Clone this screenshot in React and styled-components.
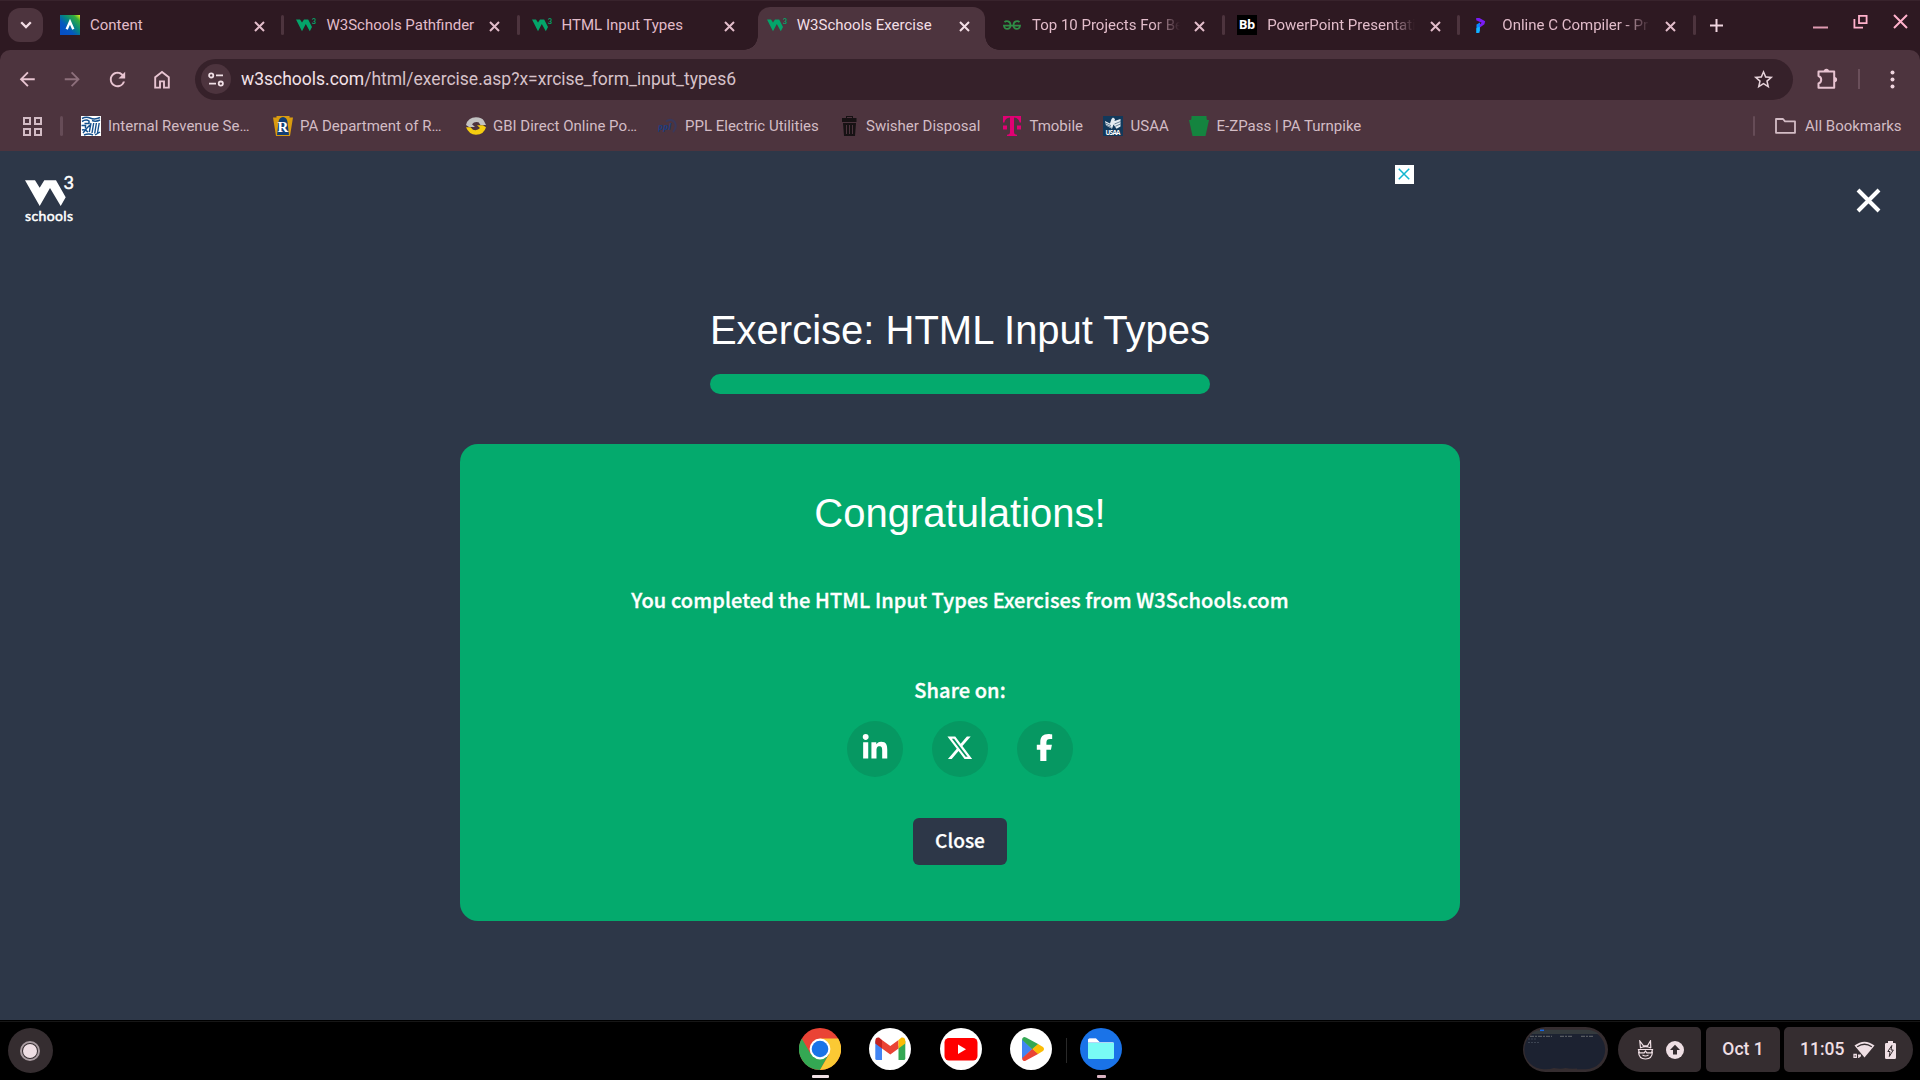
import React from "react";
import styled, { createGlobalStyle } from "styled-components";
import { FaLinkedinIn, FaFacebookF, FaXTwitter } from "react-icons/fa6";
import { MdArrowBack, MdArrowForward, MdRefresh, MdStarBorder } from "react-icons/md";

const Global = createGlobalStyle`
  *, *::before, *::after { box-sizing: border-box; }
  html, body { margin: 0; padding: 0; background: #000; overflow: hidden; }
  svg { display: block; flex: none; }
  button { border: 0; padding: 0; margin: 0; background: none; color: inherit; font: inherit; }
`;

const Screen = styled.div`
  width: 1920px;
  height: 1080px;
  display: flex;
  flex-direction: column;
  overflow: hidden;
  font-family: Roboto, "Noto Sans", sans-serif;
  background: #2d3748;
`;

/* Tab strip */
const TabStrip = styled.div`
  height: 50px;
  flex: none;
  display: flex;
  background: #2e1922;
  border-top: 1px solid #38232c;
  padding-left: 8px;
`;
const TabSearch = styled.button`
  width: 35px;
  height: 34px;
  margin: 7px 5px 0 0;
  border-radius: 12px;
  background: #4d343e;
  color: #f3dde5;
  display: grid;
  place-items: center;
`;
const Tab = styled.div`
  position: relative;
  width: ${(p) => (p.$first ? 236.4 : 235.2)}px;
  height: 48px;
  flex: none;
  display: flex;
  align-items: center;
  padding-left: 12px;
  color: ${(p) => (p.$active ? "#f3dfe6" : "#e2bcca")};
`;
const TabShape = styled.div`
  position: absolute;
  left: 3px;
  right: 5px;
  top: 6px;
  bottom: -1px;
  border-radius: 12px 12px 0 0;
  background: #4d343e;
  &::before, &::after {
    content: "";
    position: absolute;
    bottom: 0;
    width: 14px;
    height: 14px;
  }
  &::before { left: -14px; background: radial-gradient(circle at 0 0, transparent 13.5px, #4d343e 14px); }
  &::after { right: -14px; background: radial-gradient(circle at 100% 0, transparent 13.5px, #4d343e 14px); }
`;
const TabIcon = styled.span`
  position: relative;
  width: 20px;
  height: 20px;
  flex: none;
`;
const TabTitle = styled.span`
  position: relative;
  width: 148px;
  margin-left: 10px;
  font-size: 15px;
  line-height: 20px;
  white-space: nowrap;
  ${(p) => p.$fade && "-webkit-mask-image: linear-gradient(90deg, #000 122px, transparent 148px); mask-image: linear-gradient(90deg, #000 122px, transparent 148px);"}
`;
const TabClose = styled.button`
  position: relative;
  width: 20px;
  height: 20px;
  margin: 2px 0 0 ${(p) => (p.$first ? 11 : 10)}px;
  display: grid;
  place-items: center;
`;
const TabDivider = styled.span`
  width: 3px;
  height: 20px;
  margin-left: auto;
  border-radius: 1.5px;
  background: ${(p) => (p.$hidden ? "transparent" : "#4d343e")};
`;
const NewTab = styled.button`
  width: 41px;
  height: 48px;
  color: #f0d5df;
  display: grid;
  place-items: center;
`;
const WindowControls = styled.div`
  margin-left: auto;
  padding: 13px 12px 0 0;
  display: flex;
  gap: 25px;
  color: #ffb1cb;
`;

/* Toolbar */
const ToolbarBack = styled.div`
  flex: none;
  background: #2e1922;
`;
const Toolbar = styled.div`
  height: 101px;
  background: #4d343e;
  border-radius: 10px 10px 0 0;
`;
const NavRow = styled.div`
  height: 58px;
  display: flex;
  align-items: center;
  padding-left: 5px;
`;
const NavButton = styled.button`
  width: 45px;
  height: 41px;
  display: grid;
  place-items: center;
  color: ${(p) => (p.$off ? "#8d6f7b" : "#e8c4d1")};
`;
const AddressBar = styled.div`
  width: 1598px;
  height: 41px;
  margin-left: 10px;
  padding: 0 18px 0 6px;
  border-radius: 21px;
  background: #36212a;
  display: flex;
  align-items: center;
`;
const SiteInfo = styled.span`
  width: 30px;
  height: 30px;
  border-radius: 50%;
  background: #4d343e;
  display: grid;
  place-items: center;
  color: #f0dfe5;
`;
const Url = styled.span`
  margin-left: 10px;
  flex: 1;
  font-size: 17.5px;
  line-height: 24px;
  color: #d6c1c9;
  b { font-weight: 400; color: #f3e2e8; }
`;
const Extensions = styled.button`
  margin-left: 22.5px;
  color: #e8c4d1;
`;
const ThinLine = styled.span`
  width: 2px;
  height: 20px;
  margin: 0 0 0 20.5px;
  background: #6a4f5a;
`;
const Menu = styled.button`
  margin-left: 30px;
  color: #f0d5df;
`;

const BookmarkRow = styled.div`
  height: 36px;
  display: flex;
  align-items: center;
  color: #d3bcc5;
  font-size: 15px;
  padding: 0 18px 0 23px;
`;
const BarLine = styled.span`
  width: 3px;
  height: 20px;
  border-radius: 1.5px;
  background: #664c57;
  margin-left: ${(p) => p.$left}px;
  margin-right: ${(p) => p.$right}px;
`;
const Bookmark = styled.a`
  width: ${(p) => p.$w}px;
  flex: none;
  display: flex;
  align-items: center;
  gap: ${(p) => p.$gap || 7.5}px;
  white-space: nowrap;
  line-height: 20px;
`;

/* Exercise page */
const Page = styled.main`
  flex: 1;
  min-height: 0;
  background: #2d3748;
  color: #fff;
  display: flex;
  flex-direction: column;
  align-items: center;
`;
const PageHeader = styled.header`
  width: 100%;
  height: 149px;
  display: flex;
  align-items: flex-start;
  padding: 14px 39px 0 24px;
`;
const Logo = styled.a`
  margin-top: 7px;
`;
const AdClose = styled.button`
  width: 19px;
  height: 19px;
  margin-left: 1321px;
  padding: 0 1px 1px 0;
  background: #fff;
  display: grid;
  place-items: center;
`;
const ExitButton = styled.button`
  margin: 23px 0 0 auto;
`;
const Heading = styled.h1`
  margin: 0;
  font: 400 40px/60px "Liberation Sans", Arial, sans-serif;
  white-space: nowrap;
`;
const Progress = styled.div`
  width: 500px;
  height: 20px;
  margin-top: 14px;
  border-radius: 10px;
  background: #04aa6d;
`;
const Panel = styled.section`
  width: 1000px;
  height: 477px;
  margin-top: 50px;
  padding-top: 39px;
  border-radius: 18px;
  background: #04aa6d;
  display: flex;
  flex-direction: column;
  align-items: center;
`;
const Message = styled.p`
  margin: ${(p) => p.$top}px 0 0;
  font: 500 20px/30px "Noto Sans CJK JP", "Noto Sans CJK SC", sans-serif;
  letter-spacing: 0.1px;
  -webkit-text-stroke: 0.35px #fff;
  white-space: nowrap;
`;
const ShareRow = styled.div`
  margin-top: 16px;
  display: flex;
  gap: 29px;
`;
const ShareButton = styled.button`
  width: 56px;
  height: 56px;
  border-radius: 50%;
  background: #069862;
  padding: 0 1px 3px 0;
  display: grid;
  place-items: center;
`;
const CloseButton = styled.button`
  width: 94px;
  height: 47px;
  margin-top: 41px;
  padding-bottom: 2px;
  border-radius: 6px;
  background: #2d3748;
  font: 500 19.2px/45px "Noto Sans CJK JP", "Noto Sans CJK SC", sans-serif;
  -webkit-text-stroke: 0.25px #fff;
`;

/* Shelf */
const Shelf = styled.footer`
  height: 60px;
  flex: none;
  background: #000;
  border-top: 1px solid #000;
  box-shadow: inset 0 1px 0 #161616;
  display: flex;
  align-items: flex-start;
  padding: 6px 7px 0 8px;
`;
const Launcher = styled.button`
  width: 45px;
  height: 45px;
  margin-top: 1px;
  padding-right: 1px;
  border-radius: 50%;
  background: #352d30;
  display: grid;
  place-items: center;
`;
const LauncherRing = styled.span`
  width: 20px;
  height: 20px;
  border-radius: 50%;
  border: 2px solid #a99ca1;
  display: grid;
  place-items: center;
  &::after { content: ""; width: 14px; height: 14px; border-radius: 50%; background: #efdfe4; }
`;
const Apps = styled.div`
  margin: 1px 0 0 746.3px;
  display: flex;
  gap: 28.2px;
`;
const AppSlot = styled.div`
  width: 42px;
  display: flex;
  flex-direction: column;
  align-items: center;
  gap: 5px;
`;
const Running = styled.span`
  width: ${(p) => p.$w}px;
  height: 3px;
  margin-left: 1px;
  border-radius: 1px;
  background: ${(p) => p.$c};
`;
const ShelfLine = styled.span`
  width: 1px;
  height: 25px;
  margin: 10px -15.5px 0 -14px;
  background: #292929;
`;
const Tray = styled.div`
  margin-left: auto;
  display: flex;
  color: #efdfe4;
  font: 500 17.5px/45px Roboto, sans-serif;
`;
const Thumbs = styled.div`
  margin-right: 10px;
`;
const TrayPill = styled.div`
  width: ${(p) => p.$w}px;
  height: 45px;
  margin-right: ${(p) => p.$gap || 0}px;
  border-radius: ${(p) => p.$r};
  background: #352d30;
  display: flex;
  align-items: center;
  justify-content: ${(p) => (p.$center ? "center" : "flex-start")};
  padding-left: ${(p) => p.$pl || 0}px;
  gap: ${(p) => p.$inner || 0}px;
`;

const Cross = ({ size, stroke, cap = "butt", color = "currentColor" }) => (
  <svg width={size} height={size} viewBox={`0 0 ${size} ${size}`} stroke={color} strokeWidth={stroke} strokeLinecap={cap}>
    <path d={`M${stroke / 2} ${stroke / 2}L${size - stroke / 2} ${size - stroke / 2}M${size - stroke / 2} ${stroke / 2}L${stroke / 2} ${size - stroke / 2}`} />
  </svg>
);

const W3Icon = () => (
  <svg width="20" height="20" viewBox="0 0 20 20">
    <path d="M0 4.5H4L6 7.5L8 4.5H12.2L16 12L13.8 16.3L9.8 9L6 16.3Z" fill="#04a46a" />
    <text x="15.8" y="8.6" fontFamily="Lato, sans-serif" fontSize="7.5" fontWeight="700" fill="#04a46a">3</text>
  </svg>
);
const ContentIcon = () => (
  <svg width="20" height="20" viewBox="0 0 20 20">
    <defs>
      <linearGradient id="cg" x1="1" y1="0" x2="0.15" y2="0.85">
        <stop offset="0" stopColor="#f2ee1a" /><stop offset=".2" stopColor="#35ad3c" />
        <stop offset=".5" stopColor="#058681" /><stop offset=".75" stopColor="#0557c0" /><stop offset="1" stopColor="#0550c4" />
      </linearGradient>
    </defs>
    <rect width="20" height="20" fill="url(#cg)" />
    <path d="M6.7 14.2L10 6.8L13.3 14.2" fill="none" stroke="#fff" strokeWidth="2.4" />
  </svg>
);
const GeeksIcon = () => (
  <svg width="20" height="20" viewBox="0 0 20 20" fill="none" stroke="#2f8d46" strokeWidth="1.7">
    <path d="M2.5 7.2C4 5.6 8.5 5.6 8.5 10.2C8.5 15 2 15 1.9 10.6H18.1C18 15 11.5 15 11.5 10.2C11.5 5.6 16 5.6 17.5 7.2" />
  </svg>
);
const BbIcon = () => (
  <svg width="20" height="20" viewBox="0 0 20 20">
    <rect width="20" height="20" fill="#000" />
    <text x="10" y="14.3" textAnchor="middle" fontFamily="Open Sans, sans-serif" fontSize="13" fontWeight="700" fill="#fff" textLength="16.5">Bb</text>
  </svg>
);
const ProgramizIcon = () => (
  <svg width="20" height="20" viewBox="0 0 20 20">
    <path d="M4.5 9.5L8 7.5V11L7.4 18H4.5Z" fill="#0a8dff" />
    <path d="M4.2 3L7.4 3L13.2 6.2L12.4 9.3L7.6 12.8V9.8L9.7 7.8L4.2 5.2Z" fill="#7a1cf5" />
    <path d="M4.4 13.2L7.8 11.6V16L6 18H4.4Z" fill="#12b4ff" />
  </svg>
);

const tabs = [
  { title: "Content", icon: <ContentIcon />, first: true },
  { title: "W3Schools Pathfinder", icon: <W3Icon /> },
  { title: "HTML Input Types", icon: <W3Icon />, noLine: true },
  { title: "W3Schools Exercise", icon: <W3Icon />, active: true, noLine: true },
  { title: "Top 10 Projects For Be", icon: <GeeksIcon />, fade: true },
  { title: "PowerPoint Presentati", icon: <BbIcon />, fade: true },
  { title: "Online C Compiler - Pr", icon: <ProgramizIcon />, fade: true },
];

const IrsIcon = () => (
  <svg width="20" height="20" viewBox="0 0 20 20" fill="none" stroke="#14508c" strokeWidth="1.5">
    <rect width="20" height="20" fill="#fff" stroke="none" />
    <path d="M1 2.5Q5 .5 9 2Q14 4 19 1.5M1 5.5Q5 3 8 5V7.5H3.5M.5 9.5H4.5V12.5M1 14Q4 13 7 16M3 19Q8 17 12 19M11 4.5Q15 6 19 4" />
    <path d="M10 7L8.3 16M12.7 7L11 17M15.4 7L13.7 17.5M18.2 7L16.5 17M2 17L6 12L9 9M14 19L19 16" strokeWidth="1.4" />
  </svg>
);
const PaIcon = () => (
  <svg width="20" height="20" viewBox="0 0 20 20">
    <path d="M3.5 0H16.5V1.5H20L17 20H3L0 1.5H3.5Z" fill="#d99b10" />
    <path d="M5.5 6Q6 1.5 10 1Q14 1.5 14.5 6L16 19H4Z" fill="#123e74" />
    <text x="10" y="15.5" textAnchor="middle" fontFamily="Liberation Serif, serif" fontSize="15" fontWeight="700" fill="#fff">R</text>
  </svg>
);
const GbiIcon = () => (
  <svg width="20" height="20" viewBox="0 0 20 20">
    <path d="M0 9Q2 1.3 10 1.3Q16 1.3 18 5L20 9H14.5L12.5 6.3Q8.5 5 6 8.2L9 11H3Z" fill="#c2c2c2" />
    <path d="M0 11.3H4.5L7 13.8Q11.5 15 14 12L11 9.2H17L20 11.3Q18 18.7 10 18.7Q3 18.7 0 11.3Z" fill="#f5cd10" />
  </svg>
);
const PplIcon = () => (
  <svg width="20" height="20" viewBox="0 0 20 20">
    <path d="M8 5.5Q13 2 16.5 6Q19.5 11 15 16" fill="none" stroke="#343a63" strokeWidth="2" opacity=".8" />
    <text x="0" y="14" fontFamily="Open Sans, sans-serif" fontSize="8.5" fontWeight="700" fontStyle="italic" fill="#1b3c80" textLength="13">ppl</text>
  </svg>
);
const TrashIcon = () => (
  <svg width="20" height="20" viewBox="0 0 20 20">
    <path d="M7 0H14V2H17.5V6H3V2H7Z" fill="#171214" />
    <path d="M4 7H17L16 20H5Z" fill="#171214" />
    <path d="M7.5 9V18M10.5 9V18M13.5 9V18" stroke="#4d343e" strokeWidth="1" />
    <path d="M8 1.5H13" stroke="#4d343e" strokeWidth="1" />
  </svg>
);
const TmobileIcon = () => (
  <svg width="20" height="20" viewBox="0 0 20 20" fill="#e20074">
    <path d="M1 0H19V6.5H17.6Q17 2 12 1.6V16Q12 18.6 15 18.8V20H5V18.8Q8 18.6 8 16V1.6Q3 2 2.4 6.5H1Z" />
    <path d="M1 9.5H5V13.5H1ZM15 9.5H19V13.5H15Z" />
  </svg>
);
const UsaaIcon = () => (
  <svg width="20" height="20" viewBox="0 0 20 20">
    <rect width="20" height="20" fill="#12395b" />
    <path d="M2 5L7 7.5L8.5 3L10 1.5L12 3L11.5 5L17.5 3V10.5L13.5 12.8L10.5 8.5L9 12.8L3 9.5Z" fill="#e7edf2" />
    <path d="M2.5 7L8 9.6M3 9L8.4 11.5M17.5 5.5L11.5 8M17.5 8L12.3 10.3" stroke="#12395b" strokeWidth=".6" />
    <text x="10" y="18.7" textAnchor="middle" fontFamily="Open Sans, sans-serif" fontSize="6.4" fontWeight="700" fill="#fff" textLength="15">USAA</text>
  </svg>
);
const KeystoneIcon = () => (
  <svg width="20" height="20" viewBox="0 0 20 20">
    <path d="M2.5 0H17.5V2L18 4H20L16.5 20H3.5L0 4H2L2.5 2Z" fill="#14843f" />
  </svg>
);

const bookmarks = [
  [192, "Internal Revenue Se…", <IrsIcon />],
  [193, "PA Department of R…", <PaIcon />],
  [192, "GBI Direct Online Po…", <GbiIcon />],
  [181, "PPL Electric Utilities", <PplIcon />],
  [163.5, "Swisher Disposal", <TrashIcon />],
  [101, "Tmobile", <TmobileIcon />],
  [86, "USAA", <UsaaIcon />],
  [180, "E-ZPass | PA Turnpike", <KeystoneIcon />],
];

const AppIcon = ({ children, bg = "#fff" }) => (
  <svg width="42" height="42" viewBox="0 0 42 42">
    <circle cx="21" cy="21" r="21" fill={bg} />
    {children}
  </svg>
);

export default function App() {
  return (
    <Screen>
      <Global />
      <TabStrip>
        <TabSearch>
          <svg width="12" height="8" viewBox="0 0 12 8" fill="none" stroke="currentColor" strokeWidth="2.3"><path d="M1.2 1.2L6 6L10.8 1.2" /></svg>
        </TabSearch>
        {tabs.map((t) => (
          <Tab key={t.title} $active={t.active} $first={t.first}>
            {t.active && <TabShape />}
            <TabIcon>{t.icon}</TabIcon>
            <TabTitle $fade={t.fade}>{t.title}</TabTitle>
            <TabClose $first={t.first}><Cross size={11} stroke={2} /></TabClose>
            <TabDivider $hidden={t.noLine} />
          </Tab>
        ))}
        <NewTab>
          <svg width="13" height="13" viewBox="0 0 13 13" stroke="currentColor" strokeWidth="2"><path d="M6.5 0V13M0 6.5H13" /></svg>
        </NewTab>
        <WindowControls>
          <svg width="15" height="15" viewBox="0 0 15 15" stroke="currentColor" strokeWidth="2" opacity=".85"><path d="M0 13.5H15" /></svg>
          <svg width="15" height="15" viewBox="0 0 15 15" fill="none" stroke="currentColor" strokeWidth="1.8"><path d="M6 1.9H13.6V9.2H6ZM1.4 5V13.7H10" /></svg>
          <Cross size={15} stroke={2} />
        </WindowControls>
      </TabStrip>

      <ToolbarBack>
        <Toolbar>
          <NavRow>
            <NavButton><MdArrowBack size={22.5} /></NavButton>
            <NavButton $off><MdArrowForward size={22.5} /></NavButton>
            <NavButton><MdRefresh size={23} /></NavButton>
            <NavButton>
              <svg width="17" height="19" viewBox="0 0 17 19" fill="none" stroke="currentColor" strokeWidth="1.9"><path d="M1.2 17.6V7.2L8 2L14.8 7.2V17.6H10V11.4H6V17.6Z" /></svg>
            </NavButton>
            <AddressBar>
              <SiteInfo>
                <svg width="16" height="15" viewBox="0 0 16 15" fill="none" stroke="currentColor" strokeWidth="1.8"><circle cx="3.2" cy="3.4" r="2.1" /><path d="M8 3.4H15M1 11.6H8" /><circle cx="12.8" cy="11.6" r="2.1" /></svg>
              </SiteInfo>
              <Url><b>w3schools.com</b>/html/exercise.asp?x=xrcise_form_input_types6</Url>
              <MdStarBorder size={23} color="#e6d2d9" />
            </AddressBar>
            <Extensions>
              <svg width="22" height="22" viewBox="0 0 22 22" fill="none" stroke="currentColor" strokeWidth="2" strokeLinejoin="round">
                <path d="M2.5 3.6H18.2V19.8H2.5V15.4Q5.2 14.5 5.2 11.7Q5.2 9 2.5 8Z" />
                <path d="M7.8 3.3a2.6 2.6 0 0 1 5.2 0ZM18.5 9a2.6 2.6 0 0 1 0 5.2Z" fill="currentColor" stroke="none" />
              </svg>
            </Extensions>
            <ThinLine />
            <Menu>
              <svg width="5" height="19" viewBox="0 0 5 19" fill="currentColor"><circle cx="2.5" cy="2.5" r="2" /><circle cx="2.5" cy="9.5" r="2" /><circle cx="2.5" cy="16.5" r="2" /></svg>
            </Menu>
          </NavRow>
          <BookmarkRow>
            <svg width="19" height="19" viewBox="0 0 19 19" fill="none" stroke="currentColor" strokeWidth="2"><path d="M1 1H7V7H1ZM12 1H18V7H12ZM1 12H7V18H1ZM12 12H18V18H12Z" /></svg>
            <BarLine $left={18} $right={18} />
            {bookmarks.map(([w, name, icon]) => (
              <Bookmark key={name} $w={w}>{icon}<span>{name}</span></Bookmark>
            ))}
            <BarLine $left={383.5} $right={20} />
            <Bookmark $w={127} $gap={9}>
              <svg width="21" height="16" viewBox="0 0 21 16" fill="none" stroke="currentColor" strokeWidth="1.8"><path d="M1 14.8V1H8L10 3.4H20V14.8Z" strokeLinejoin="round" /></svg>
              <span>All Bookmarks</span>
            </Bookmark>
          </BookmarkRow>
        </Toolbar>
      </ToolbarBack>

      <Page>
        <PageHeader>
          <Logo>
            <svg width="50" height="52" viewBox="0 0 50 52" fill="#fff">
              <path d="M1 8.2H11L15.7 15.8L20.3 8.2H32L41.7 25.3L36.7 34L26 16L15.7 34Z" />
              <text x="39.4" y="16.8" fontFamily="Lato, sans-serif" fontSize="18" fontWeight="400" stroke="#fff" strokeWidth=".5">3</text>
              <text x="1" y="48.8" fontFamily="Lato, sans-serif" fontSize="14" fontWeight="400" stroke="#fff" strokeWidth=".5" textLength="48">schools</text>
            </svg>
          </Logo>
          <AdClose><Cross size={12} stroke={1.5} color="#12b5cf" /></AdClose>
          <ExitButton><Cross size={25} stroke={4} /></ExitButton>
        </PageHeader>
        <Heading>Exercise: HTML Input Types</Heading>
        <Progress />
        <Panel>
          <Heading>Congratulations!</Heading>
          <Message $top={42}>You completed the HTML Input Types Exercises from W3Schools.com</Message>
          <Message $top={60}>Share on:</Message>
          <ShareRow>
            <ShareButton><FaLinkedinIn size={28} /></ShareButton>
            <ShareButton><FaXTwitter size={27.5} /></ShareButton>
            <ShareButton><FaFacebookF size={27} /></ShareButton>
          </ShareRow>
          <CloseButton>Close</CloseButton>
        </Panel>
      </Page>

      <Shelf>
        <Launcher><LauncherRing /></Launcher>
        <Apps>
          <AppSlot>
            <AppIcon bg="#ea4335">
              <path d="M2.8 10.5A21 21 0 0 0 21 42L30 26L21 21L11.9 26.2Z" fill="#34a853" />
              <path d="M21 42A21 21 0 0 0 39.2 10.5H21L30.1 26.2Z" fill="#fbc934" />
              <circle cx="21" cy="21" r="10.4" fill="#fff" />
              <circle cx="21" cy="21" r="8.3" fill="#1a73e8" />
            </AppIcon>
            <Running $w={17} $c="#efdfe4" />
          </AppSlot>
          <AppSlot>
            <AppIcon>
              <path d="M6.3 13V30.5Q6.3 32 7.8 32H13V18Z" fill="#4285f4" />
              <path d="M29.5 18V32H34.7Q36.3 32 36.3 30.5V13Z" fill="#34a853" />
              <path d="M13 12V20.5L21.3 26.5L29.5 20.5V12L21.3 18Z" fill="#ea4335" />
              <path d="M6.3 15.5V12.8Q6.5 9 10 9.6L13 12V20.5Z" fill="#c5221f" />
              <path d="M36.3 15.5V12.8Q36 9 32.5 9.6L29.5 12V20.5Z" fill="#fbbc04" />
            </AppIcon>
          </AppSlot>
          <AppSlot>
            <AppIcon>
              <rect x="4.5" y="10" width="33" height="22.5" rx="4.5" fill="#f00" />
              <path d="M18 16.5V26L26 21.2Z" fill="#fff" />
            </AppIcon>
          </AppSlot>
          <AppSlot>
            <AppIcon>
              <path d="M12 11V31L22.5 21Z" fill="#4285f4" />
              <path d="M12.3 10.5Q13.5 8 16 9.5L28.5 16.3L22.5 21.5L12.3 12Z" fill="#34a853" />
              <path d="M12.3 31.5Q13.5 34 16 32.5L28.5 25.7L22.5 20.7L12.3 30Z" fill="#ea4335" />
              <path d="M28 16L33 19Q35 21 33 23L28 26L22.3 21Z" fill="#fbbc04" />
            </AppIcon>
          </AppSlot>
          <ShelfLine />
          <AppSlot>
            <AppIcon bg="#1a73e8">
              <path d="M8 13V12Q8 10.5 9.5 10.5H16L19.5 14H32.5Q34 14 34 15.5V17H8Z" fill="#c5c9f4" />
              <path d="M8 12Q8 10.5 9.5 10.5H16L19.5 14H8Z" fill="#fff" />
              <path d="M8 14.8H34V29.5Q34 31 32.5 31H9.5Q8 31 8 29.5Z" fill="#78fbf5" />
            </AppIcon>
            <Running $w={9} $c="#d9b3c2" />
          </AppSlot>
        </Apps>
        <Tray>
          <Thumbs>
            <svg width="85" height="45" viewBox="0 0 85 45">
              <rect width="85" height="45" rx="22.5" fill="#352d30" />
              <path d="M21 3H63.5A19.5 19.5 0 0 1 54 41.5Q46 42 42.5 41Q38 42.5 31 41Q27 42.5 21 42.3A19.5 19.5 0 0 1 21 3Z" fill="#1c2231" />
              <path d="M62 3A19.5 19.5 0 0 1 63 42.3H54V3Z" fill="#1c2231" />
              <path d="M9 6Q14 2.8 21 2.8H63Q71 3 76 7H9Z" fill="#343a3d" />
              <path d="M17 3.3H21" stroke="#1766df" strokeWidth="1.5" />
              <path d="M7 9.3H29M37 9.3H50M58 9.3H70" stroke="#66696d" strokeWidth="1" strokeDasharray="4 1 2 1" />
              <path d="M5 12H13M5 15.5H16" stroke="#454d5b" strokeWidth=".8" strokeDasharray="2 1" />
            </svg>
          </Thumbs>
          <TrayPill $w={82.5} $r="23px 5px 5px 23px" $gap={5.5} $pl={18.5} $inner={12}>
            <svg width="17" height="20" viewBox="0 0 17 20" fill="none" stroke="currentColor" strokeWidth="1.2">
              <path d="M3.5 8L2.8 1L6.5 5.8H10.5L13.5 .8L13.8 8M3 8Q8.5 5.5 14 8M1.5 11.5Q1.8 19 8.5 19Q15.2 19 15.5 11.5M5.5 15Q8.5 17 11.5 15" />
              <path d="M1.5 9.5H15.5L14.5 12.8H9.8L8.5 11L7.2 12.8H2.5Z" />
            </svg>
            <svg width="18" height="18" viewBox="0 0 18 18"><circle cx="9" cy="9" r="9" fill="currentColor" /><path d="M9 3.8L14 9H11V13.6H7V9H4Z" fill="#352d30" /></svg>
          </TrayPill>
          <TrayPill $w={74} $r="5px" $gap={4} $center>Oct 1</TrayPill>
          <TrayPill $w={129} $r="5px 23px 23px 5px" $pl={16} $inner={9}>
            <span>11:05</span>
            <svg width="22" height="18" viewBox="0 0 22 18">
              <path d="M1.5 4.5Q11.5-3.2 21.5 4.5L11.5 16.5Z" fill="currentColor" />
              <path d="M4.2 5.8Q11.5 .7 18.8 5.8" fill="none" stroke="#352d30" strokeWidth="1.3" />
              <path d="M0 12.3H6.2L9 15V18H0Z" fill="#352d30" />
              <path d="M1 13.5H3.3V16.3H1ZM5 14.2H8M5.8 14.2V17M7 13.5V16" fill="none" stroke="currentColor" strokeWidth="1.3" />
            </svg>
            <svg width="12" height="18" viewBox="-1 0 12 18"><path d="M3 0H8V2H9.7Q11 2 11 3.3V16.7Q11 18 9.7 18H1.3Q0 18 0 16.7V3.3Q0 2 1.3 2H3Z" fill="currentColor" /><path d="M6.8 4.5L2.8 10.5H5L4.3 15.5L8.3 9H6Z" fill="none" stroke="#352d30" strokeWidth="1" /></svg>
          </TrayPill>
        </Tray>
      </Shelf>
    </Screen>
  );
}
